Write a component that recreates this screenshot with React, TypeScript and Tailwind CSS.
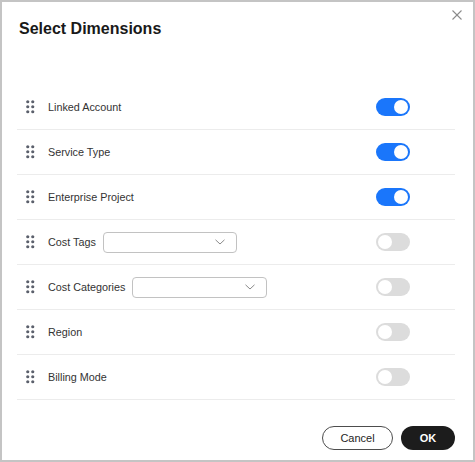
import React from "react";

type Row = {
  label: string;
  on: boolean;
  select?: number;
};

const rows: Row[] = [
  { label: "Linked Account", on: true },
  { label: "Service Type", on: true },
  { label: "Enterprise Project", on: true },
  { label: "Cost Tags", on: false, select: 134 },
  { label: "Cost Categories", on: false, select: 135 },
  { label: "Region", on: false },
  { label: "Billing Mode", on: false },
];

function DragHandle() {
  return (
    <svg width="9" height="14" viewBox="0 0 9 14" className="shrink-0">
      {[0, 5, 10].map((y) => (
        <React.Fragment key={y}>
          <circle cx="1.75" cy={y + 1.75} r="1.6" fill="#5b606c" />
          <circle cx="6.75" cy={y + 1.75} r="1.6" fill="#5b606c" />
        </React.Fragment>
      ))}
    </svg>
  );
}

function Toggle({ on }: { on: boolean }) {
  return (
    <div
      className={`w-[34px] h-[18px] rounded-full flex items-center px-[2px] ${
        on ? "bg-[#1a76fb] justify-end" : "bg-[#dcdcdc] justify-start"
      }`}
    >
      <div className="w-[14px] h-[14px] rounded-full bg-white" />
    </div>
  );
}

function Select({ width }: { width: number }) {
  return (
    <div
      className="h-[21px] rounded-[4px] border border-[#c2c2c2] bg-white flex items-center justify-end pr-[11px]"
      style={{ width }}
    >
      <svg width="10" height="6" viewBox="0 0 10 6" fill="none">
        <polyline points="0.5 0.8 5 5 9.5 0.8" stroke="#8a8a8a" strokeWidth="1" />
      </svg>
    </div>
  );
}

export default function App() {
  return (
    <div
      className="w-[475px] h-[462px] border-2 border-[#c4c4c4] bg-white relative"
      style={{ fontFamily: '"Liberation Sans", Arial, sans-serif' }}
    >
      {/* Close */}
      <button className="absolute right-[11px] top-[7px] w-[11px] h-[11px] flex items-center justify-center">
        <svg width="10" height="10" viewBox="0 0 10 10" fill="none">
          <line x1="0.5" y1="0.5" x2="9.5" y2="9.5" stroke="#8c8c8c" strokeWidth="1.1" />
          <line x1="9.5" y1="0.5" x2="0.5" y2="9.5" stroke="#8c8c8c" strokeWidth="1.1" />
        </svg>
      </button>

      {/* Header */}
      <div className="pl-[17px] pt-[17px]">
        <h2 className="text-[16px] leading-[20px] font-bold text-[#191919]">Select Dimensions</h2>
      </div>

      {/* Dimension list */}
      <div className="ml-[15px] mr-[18px] mt-[46px]">
        {rows.map((row) => (
          <div
            key={row.label}
            className="h-[45px] border-b border-[#ececec] flex items-center pl-[9px] pr-[45px]"
          >
            <DragHandle />
            <span className="ml-[13px] text-[10.8px] text-[#333333] whitespace-nowrap">{row.label}</span>
            {row.select && (
              <div className="ml-[7px]">
                <Select width={row.select} />
              </div>
            )}
            <div className="ml-auto">
              <Toggle on={row.on} />
            </div>
          </div>
        ))}
      </div>

      {/* Footer */}
      <div className="flex justify-end gap-[8px] mr-[18px] mt-[26px]">
        <button className="w-[71px] h-[24px] rounded-full border border-[#4d4d4d] text-[11px] text-[#252525] bg-white">
          Cancel
        </button>
        <button className="w-[54px] h-[24px] rounded-full bg-[#1c1c1c] text-[11px] font-bold text-white">
          OK
        </button>
      </div>
    </div>
  );
}
